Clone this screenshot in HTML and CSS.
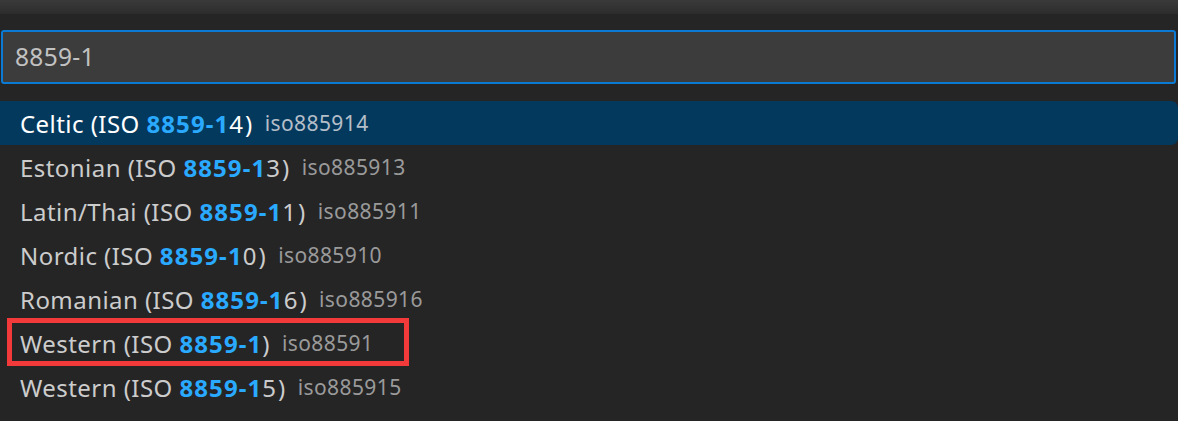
FILE: index.html
```html
<!DOCTYPE html>
<html>
<head>
<meta charset="utf-8">
<link rel="stylesheet" href="styles.css">
</head>
<body>
<div class="titlebar"></div>
<div class="picker">
  <div class="input-wrap">
    <div class="input">8859-1</div>
  </div>
  <div class="list">
    <div class="row selected"><span class="label">Celtic (ISO <b>8859-1</b><span class="num">4</span>)</span><span class="desc">iso885914</span></div>
    <div class="row"><span class="label">Estonian (ISO <b>8859-1</b><span class="num">3</span>)</span><span class="desc">iso885913</span></div>
    <div class="row"><span class="label">Latin/Thai (ISO <b>8859-1</b><span class="num">1</span>)</span><span class="desc">iso885911</span></div>
    <div class="row"><span class="label">Nordic (ISO <b>8859-1</b><span class="num">0</span>)</span><span class="desc">iso885910</span></div>
    <div class="row"><span class="label">Romanian (ISO <b>8859-1</b><span class="num">6</span>)</span><span class="desc">iso885916</span></div>
    <div class="row marked"><span class="label">Western (ISO <b>8859-1</b>)</span><span class="desc">iso88591</span></div>
    <div class="row"><span class="label">Western (ISO <b>8859-1</b><span class="num">5</span>)</span><span class="desc">iso885915</span></div>
  </div>
</div>
</body>
</html>
```
FILE: styles.css
```css
html, body {
  margin: 0;
  padding: 0;
  background: #252526;
  overflow: hidden;
}
body {
  width: 1178px;
  height: 421px;
  font-family: "Noto Sans", "Open Sans", sans-serif;
}
.titlebar {
  height: 14px;
  background: linear-gradient(#3a3a3a, #2c2c2c);
}
.picker {
  padding-top: 16px;
}
.input-wrap {
  padding: 0 2px 0 1px;
}
.input {
  height: 50px;
  border: 2px solid #0a7ad4;
  border-radius: 3px;
  background: #3c3c3c;
  color: #c2c2c2;
  font-size: 24.5px;
  line-height: 50px;
  padding-left: 12px;
  letter-spacing: 0.3px;
}
.list {
  margin-top: 17px;
}
.row {
  height: 44px;
  display: flex;
  align-items: center;
  padding-left: 20px;
  font-size: 24px;
  letter-spacing: 0.45px;
  color: #cccccc;
  white-space: nowrap;
  box-sizing: border-box;
}
.row b {
  color: #2aaaff;
  font-weight: 700;
  letter-spacing: 1.1px;
}
.num {
  letter-spacing: 2px;
}
.desc {
  margin-left: 12px;
  color: #9a9a9a;
  font-size: 21px;
  letter-spacing: 0.4px;
}
.selected {
  background: #04395e;
  color: #ffffff;
  border-radius: 0 7px 7px 0;
}
.selected .desc {
  color: #b4bec8;
}
.marked {
  position: relative;
}
.marked::after {
  content: "";
  position: absolute;
  left: 7px;
  top: -3px;
  width: 402px;
  height: 48px;
  box-sizing: border-box;
  border: 5px solid #f23a3a;
}
```
